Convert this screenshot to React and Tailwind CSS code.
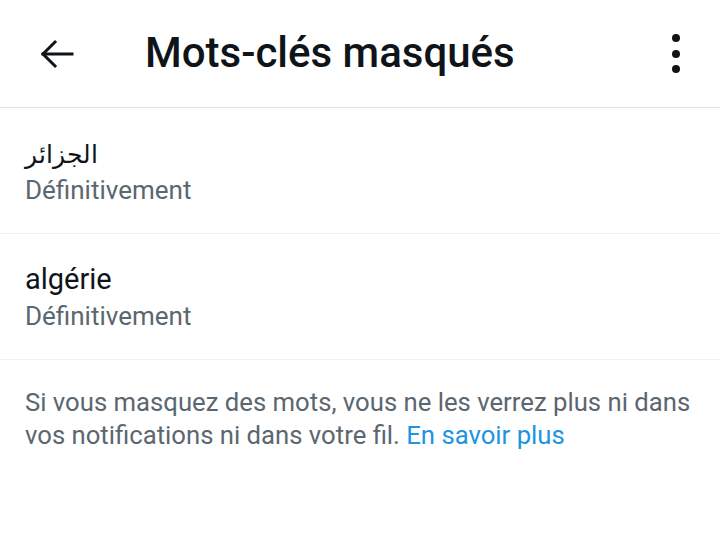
export default function App() {
  return (
    <div className="w-[720px] h-[547px] bg-white overflow-hidden" style={{ fontFamily: "Roboto, 'Noto Sans', sans-serif" }}>
      <header className="h-[108px] flex items-center border-b border-[#dde1e4]">
        <div className="w-[145px] pl-[40px] flex items-center">
          <svg width="34" height="30" viewBox="0 0 34 30" fill="none" stroke="#0f1419" strokeWidth="3" strokeLinecap="square">
            <path d="M3 15 H32" />
            <path d="M15 3 L3 15 L15 27" strokeLinejoin="miter" />
          </svg>
        </div>
        <h1 className="flex-1 text-[42px] font-medium text-[#0f1419] leading-none pb-[2px]">Mots-clés masqués</h1>
        <div className="pr-[40px] flex flex-col gap-[7.5px] items-center">
          <span className="block w-[8px] h-[8px] rounded-full bg-[#0f1419]" />
          <span className="block w-[8px] h-[8px] rounded-full bg-[#0f1419]" />
          <span className="block w-[8px] h-[8px] rounded-full bg-[#0f1419]" />
        </div>
      </header>
      <div className="h-[126px] border-b border-[#eff1f2] px-[25px] flex flex-col justify-center pb-[2px]">
        <div className="text-[25px] text-[#0f1419] leading-[40px]" style={{ fontFamily: "'Noto Sans', Roboto, sans-serif" }}>الجزائر</div>
        <div className="text-[26px] text-[#5b6770] leading-[34px]">Définitivement</div>
      </div>
      <div className="h-[126px] border-b border-[#eff1f2] px-[25px] flex flex-col justify-center pb-[2px]">
        <div className="text-[29px] text-[#0f1419] leading-[40px]">algérie</div>
        <div className="text-[26px] text-[#5b6770] leading-[34px]">Définitivement</div>
      </div>
      <p className="pl-[25px] pr-[20px] pt-[26px] text-[25.7px] leading-[33px] text-[#5b6770]">
        Si vous masquez des mots, vous ne les verrez plus ni dans vos notifications ni dans votre fil. <span className="text-[#1d95e0]">En savoir plus</span>
      </p>
    </div>
  );
}
